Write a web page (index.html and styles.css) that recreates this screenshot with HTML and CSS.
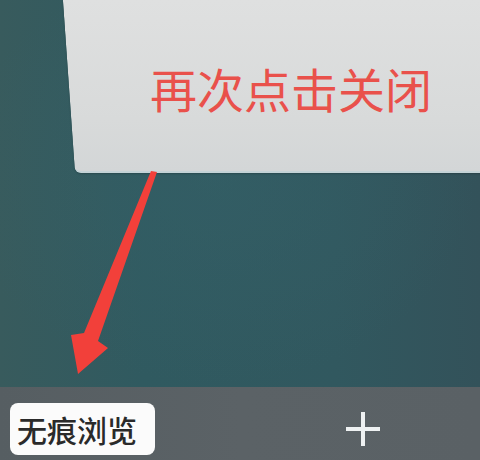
FILE: index.html
```html
<!DOCTYPE html>
<html lang="zh">
<head>
<meta charset="utf-8">
<link rel="stylesheet" href="styles.css">
</head>
<body>
<div class="screen">
  <div class="stage">
    <div class="card">
      <span class="hint">再次点击关闭</span>
    </div>
    <svg class="arrow" width="480" height="387" viewBox="0 0 480 387" aria-hidden="true">
      <polygon points="151,171 157,172 98,341 108,348 78,374 71,335 84,333" fill="#f2403a"/>
    </svg>
  </div>
  <div class="bar">
    <div class="badge">无痕浏览</div>
    <div class="plus" aria-label="新建"></div>
  </div>
</div>
</body>
</html>
```

FILE: styles.css
```css
html, body {
  margin: 0;
  padding: 0;
}
body {
  width: 480px;
  height: 460px;
  overflow: hidden;
  font-family: "Noto Sans CJK SC", "Noto Sans", sans-serif;
}
.screen {
  display: flex;
  flex-direction: column;
  height: 460px;
}
.stage {
  position: relative;
  flex: 1;
  overflow: hidden;
  background:
    radial-gradient(ellipse at 45% 45%, rgba(54, 98, 106, 0.45), rgba(54, 98, 106, 0) 70%),
    linear-gradient(90deg, #385b5d 0%, #305a60 30%, #31585f 70%, #33525a 100%);
}
.card {
  position: relative;
  height: 173px;
  margin-left: 63px;
  padding-left: 87px;
  display: flex;
  align-items: center;
}
.card::before {
  content: "";
  position: absolute;
  left: 0;
  top: 0;
  right: -20px;
  bottom: 0;
  background: linear-gradient(180deg, #dfe0e0 0%, #d8dada 70%, #d3d6d7 100%);
  border-bottom: 2px solid #c4d3d7;
  border-bottom-left-radius: 6px;
  transform-origin: 0 100%;
  transform: skewX(4deg) translateX(12px);
  box-shadow: 0 1px 2px rgba(0, 0, 0, 0.2);
}
.hint {
  position: relative;
  font-size: 47px;
  line-height: 1;
  color: #e9514b;
  margin-top: 2px;
}
.arrow {
  position: absolute;
  left: 0;
  top: 0;
}
.bar {
  height: 73px;
  box-sizing: border-box;
  background: linear-gradient(90deg, #565e62 0%, #5b6266 50%, #5a6165 100%);
  display: flex;
  align-items: flex-start;
  padding: 16px 0 0 10px;
}
.badge {
  width: 145px;
  height: 52px;
  box-sizing: border-box;
  background: #fbfbfb;
  border-radius: 8px;
  padding-left: 7px;
  display: flex;
  align-items: center;
  font-size: 30px;
  font-weight: 500;
  line-height: 1;
  color: #2a2a2a;
}
.plus {
  position: relative;
  width: 34px;
  height: 34px;
  margin-left: 191px;
  margin-top: 9px;
}
.plus::before,
.plus::after {
  content: "";
  position: absolute;
  background: #eef1f2;
}
.plus::before {
  left: 0;
  right: 0;
  top: 15px;
  height: 4px;
}
.plus::after {
  top: 0;
  bottom: 0;
  left: 15px;
  width: 4px;
}
```
